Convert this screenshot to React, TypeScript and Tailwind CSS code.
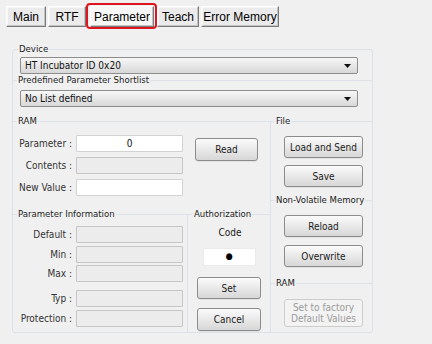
import React from "react";

const lucida = "font-[family-name:DejaVu_Sans_Condensed,DejaVu_Sans,sans-serif]";

const Tab = ({ label, className = "", active = false }: { label: string; className?: string; active?: boolean }) => (
    <div
        className={`relative h-[21px] flex items-center justify-center text-[12px] text-black border border-t-white border-l-white border-r-[#7a7a7a] border-b-[#7a7a7a] shadow-[inset_-1px_-1px_0_#c4c4c4,inset_1px_1px_0_#f6f6f6] ${active ? "bg-[#f7f7f7]" : "bg-[#ebebeb]"} ${className}`}
    >
        {label}
        {active && <span className="absolute -left-[5px] -top-[4px] -right-[4px] -bottom-[3px] border-2 border-[#e0141e] rounded-[4px]" />}
    </div>
);

const Title = ({ text, left = 5 }: { text: string; left?: number }) => (
    <span
        className={`absolute top-[-7px] ${left === 5 ? "left-[4px]" : "left-[5px]"} px-px bg-[#f0f0f0] text-[9.5px] leading-[12px] text-[#1c1c1c] whitespace-nowrap`}
    >
        {text}
    </span>
);

const Select = ({ value }: { value: string }) => (
    <div className="h-[17px] flex items-center justify-between pl-[4px] pr-[6px] border border-[#8d8d8d] rounded-[2px] bg-gradient-to-b from-[#f7f7f7] to-[#d8d8d8] text-[10px] text-[#111]">
        <span>{value}</span>
        <svg width="7" height="4" viewBox="0 0 7 4">
            <path d="M0 0h7L3.5 4z" fill="#111" />
        </svg>
    </div>
);

const Field = ({ value = "", disabled = false }: { value?: string; disabled?: boolean }) => (
    <div
        className={`w-[107px] h-[17px] flex items-center justify-center text-[10px] text-[#111] border rounded-[1px] ${disabled ? "bg-[#ececec] border-[#c6c6c6]" : "bg-white border-[#d2d2d2]"}`}
    >
        {value}
    </div>
);

const Btn = ({ children, className = "", disabled = false }: { children: React.ReactNode; className?: string; disabled?: boolean }) => (
    <div
        className={`flex items-center justify-center text-center rounded-[3px] border text-[10px] leading-[11px] ${disabled ? "border-[#cdcdcd] bg-[#f3f3f3] text-[#9b9b9b]" : "border-[#8c8c8c] bg-gradient-to-b from-[#fbfbfb] to-[#d7d7d7] text-[#1c1c1c] shadow-[0_1px_0_#e2e2e2]"} ${className}`}
    >
        {children}
    </div>
);

const Row = ({ label, children, className = "" }: { label: string; children: React.ReactNode; className?: string }) => (
    <div className={`flex items-center ${className}`}>
        <span className="w-[60px] pr-[1px] text-right text-[10px] text-[#333]">{label} :</span>
        <div className="ml-[3px]">{children}</div>
    </div>
);

export default function App() {
    return (
        <div className={`w-[432px] h-[344px] bg-[#f0f0f0] overflow-hidden ${lucida}`}>
            {/* Tabs */}
            <div className="flex pt-[6px] pl-[6px] font-[family-name:Liberation_Sans,Arial,sans-serif]">
                <Tab label="Main" className="w-[40px]" />
                <Tab label="RTF" className="w-[38px] ml-[2px]" />
                <Tab label="Parameter" className="w-[64px] ml-[4px]" active />
                <Tab label="Teach" className="w-[42px] ml-[3px]" />
                <Tab label="Error Memory" className="w-[78px] ml-[2px]" />
            </div>

            {/* Panel */}
            <div className="ml-[12px] mt-[22px] w-[361px] h-[284px] border border-[#dce2e9] rounded-[3px] flex flex-col">
                <div className="relative pt-[7px] pl-[7px] pr-[14px] pb-[6px]">
                    <Title text="Device" left={6} />
                    <Select value="HT Incubator ID 0x20" />
                </div>
                <div className="relative border-t border-[#dce2e9] pt-[9px] pl-[7px] pr-[14px] pb-[14px]">
                    <Title text="Predefined Parameter Shortlist" />
                    <Select value="No List defined" />
                </div>

                <div className="flex flex-1 border-t border-[#dce2e9]">
                    {/* Left column */}
                    <div className="w-[257px] flex flex-col">
                        <div className="relative h-[92px] pt-[13px] flex">
                            <Title text="RAM" />
                            <div className="flex flex-col gap-[5px]">
                                <Row label="Parameter">
                                    <Field value="0" />
                                </Row>
                                <Row label="Contents">
                                    <Field disabled />
                                </Row>
                                <Row label="New Value">
                                    <Field />
                                </Row>
                            </div>
                            <Btn className="w-[63px] h-[23px] ml-[12px] mt-[3px]">Read</Btn>
                        </div>

                        <div className="flex flex-1 border-t border-[#dce2e9]">
                            <div className="relative w-[174px] pt-[11px]">
                                <Title text="Parameter Information" />
                                <Row label="Default">
                                    <Field disabled />
                                </Row>
                                <Row label="Min" className="mt-[3px]">
                                    <Field disabled />
                                </Row>
                                <Row label="Max" className="mt-[2px]">
                                    <Field disabled />
                                </Row>
                                <Row label="Typ" className="mt-[8px]">
                                    <Field disabled />
                                </Row>
                                <Row label="Protection" className="mt-[3px]">
                                    <Field disabled />
                                </Row>
                            </div>
                            <div className="relative flex-1 border-l border-[#dce2e9] flex flex-col items-center pt-[12px]">
                                <Title text="Authorization" left={6} />
                                <span className="text-[10px] leading-[12px] text-[#222] ml-[2px]">Code</span>
                                <div className="w-[53px] h-[18px] mt-[9px] bg-white border border-[#ebebeb] flex items-center justify-center text-[9px] text-black">
                                    ●
                                </div>
                                <Btn className="w-[64px] h-[22px] mt-[11px]">Set</Btn>
                                <Btn className="w-[64px] h-[23px] mt-[9px]">Cancel</Btn>
                            </div>
                        </div>
                    </div>

                    {/* Right column */}
                    <div className="flex-1 border-l border-[#dce2e9] flex flex-col">
                        <div className="relative pt-[14px] pb-[13px] pl-[13px]">
                            <Title text="File" />
                            <Btn className="w-[79px] h-[22px]">Load and Send</Btn>
                            <Btn className="w-[79px] h-[22px] mt-[7px]">Save</Btn>
                        </div>
                        <div className="relative border-t border-[#dce2e9] pt-[14px] pb-[16px] pl-[13px]">
                            <Title text="Non-Volatile Memory" />
                            <Btn className="w-[79px] h-[22px]">Reload</Btn>
                            <Btn className="w-[79px] h-[22px] mt-[8px]">Overwrite</Btn>
                        </div>
                        <div className="relative border-t border-[#dce2e9] pt-[15px] pl-[13px]">
                            <Title text="RAM" />
                            <Btn disabled className="w-[79px] h-[28px]">
                                Set to factory
                                <br />
                                Default Values
                            </Btn>
                        </div>
                    </div>
                </div>
            </div>
        </div>
    );
}
